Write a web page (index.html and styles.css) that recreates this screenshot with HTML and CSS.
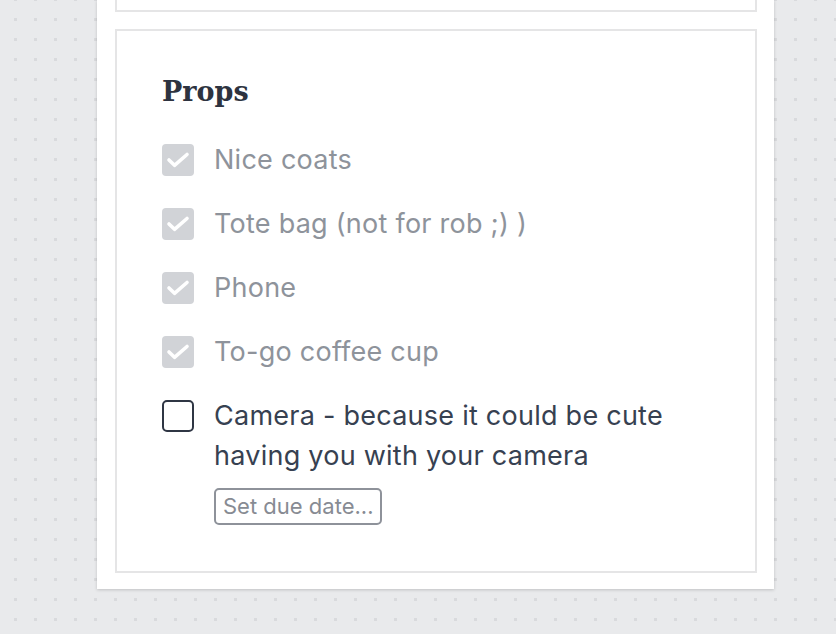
FILE: index.html
```html
<!DOCTYPE html>
<html>
<head>
<meta charset="utf-8">
<link rel="stylesheet" href="styles.css">
</head>
<body>
<div class="card">
  <div class="box box-top"></div>
  <div class="box box-main">
    <h2 class="title">Props</h2>
    <ul class="list">
      <li class="item done">
        <span class="check"><svg viewBox="0 0 32 32" width="32" height="32"><path d="M7 16 L12.5 21.3 L25 10.5" fill="none" stroke="#fff" stroke-width="3.6" stroke-linecap="round" stroke-linejoin="round"/></svg></span>
        <div class="body"><span class="label">Nice coats</span></div>
      </li>
      <li class="item done">
        <span class="check"><svg viewBox="0 0 32 32" width="32" height="32"><path d="M7 16 L12.5 21.3 L25 10.5" fill="none" stroke="#fff" stroke-width="3.6" stroke-linecap="round" stroke-linejoin="round"/></svg></span>
        <div class="body"><span class="label">Tote bag (not for rob ;) )</span></div>
      </li>
      <li class="item done">
        <span class="check"><svg viewBox="0 0 32 32" width="32" height="32"><path d="M7 16 L12.5 21.3 L25 10.5" fill="none" stroke="#fff" stroke-width="3.6" stroke-linecap="round" stroke-linejoin="round"/></svg></span>
        <div class="body"><span class="label">Phone</span></div>
      </li>
      <li class="item done">
        <span class="check"><svg viewBox="0 0 32 32" width="32" height="32"><path d="M7 16 L12.5 21.3 L25 10.5" fill="none" stroke="#fff" stroke-width="3.6" stroke-linecap="round" stroke-linejoin="round"/></svg></span>
        <div class="body"><span class="label">To-go coffee cup</span></div>
      </li>
      <li class="item">
        <span class="check empty"></span>
        <div class="body">
          <span class="label">Camera - because it could be cute having you with your camera</span>
          <button class="due">Set due date...</button>
        </div>
      </li>
    </ul>
  </div>
</div>
</body>
</html>
```

FILE: styles.css
```css
html, body {
  margin: 0;
  padding: 0;
}
body {
  width: 836px;
  height: 634px;
  overflow: hidden;
  background-color: #e9eaec;
  background-image: conic-gradient(at 3px 3px, transparent 75%, #d9dadd 0);
  background-size: 20px 20px;
  background-position: 14px 18px;
  font-family: "Inter", "Liberation Sans", sans-serif;
}
.card {
  margin-left: 97px;
  width: 677px;
  box-sizing: border-box;
  background: #fff;
  padding: 0 17px 16px 18px;
  box-shadow: 0 1px 3px rgba(0, 0, 0, 0.18);
  display: flex;
  flex-direction: column;
  gap: 17px;
}
.box {
  border: 2px solid #e5e5e6;
  box-sizing: border-box;
}
.box-top {
  border-top: none;
  height: 12px;
}
.box-main {
  padding: 43px 30px 46px 45px;
}
.title {
  margin: 0 0 30px 0;
  font-family: "DejaVu Serif", "Liberation Serif", serif;
  font-weight: bold;
  font-size: 27px;
  line-height: 36px;
  color: #2d3340;
}
.list {
  list-style: none;
  margin: 0;
  padding: 0;
  display: flex;
  flex-direction: column;
  gap: 24px;
}
.item {
  display: flex;
  align-items: flex-start;
  gap: 20px;
}
.check {
  flex: none;
  width: 32px;
  height: 32px;
  margin-top: 4px;
  border-radius: 4px;
  background: #d1d3d7;
  box-sizing: border-box;
  display: flex;
}
.check.empty {
  background: #fff;
  border: 2px solid #2f3644;
  border-radius: 5px;
}
.body {
  display: flex;
  flex-direction: column;
  align-items: flex-start;
  gap: 12px;
}
.label {
  font-size: 27px;
  letter-spacing: 0.25px;
  line-height: 40px;
  color: #374151;
}
.done .label {
  color: #8e939b;
}
.due {
  font-family: "Inter", "Liberation Sans", sans-serif;
  font-size: 22px;
  line-height: 33px;
  height: 37px;
  box-sizing: border-box;
  color: #878b93;
  background: #fff;
  border: 2px solid #8e929a;
  border-radius: 5px;
  padding: 0 7px;
  margin: 0;
}
```
